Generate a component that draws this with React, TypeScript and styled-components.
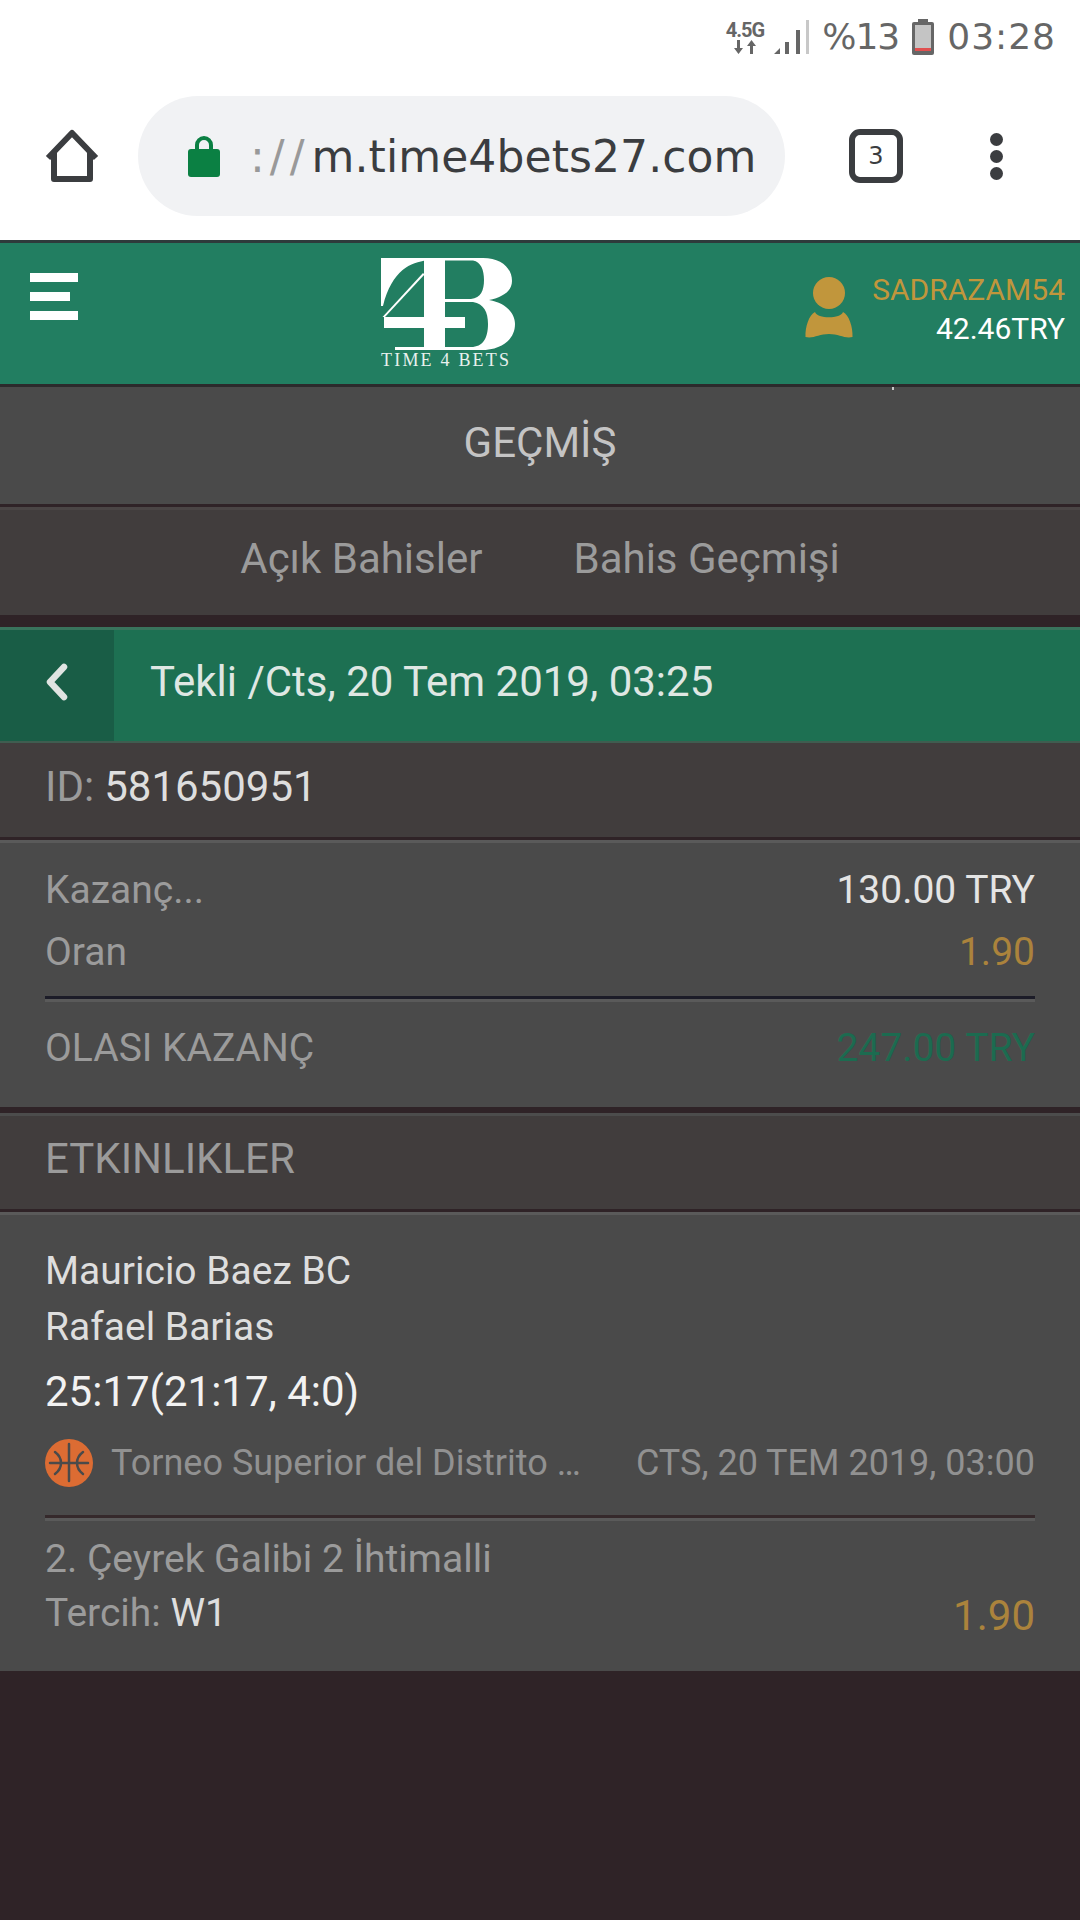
import React from "react";
import styled, { createGlobalStyle } from "styled-components";

const Global = createGlobalStyle`
  html, body { margin: 0; padding: 0; background: #2f2327; }
  body { font-family: Roboto, "Liberation Sans", sans-serif; }
  * { box-sizing: border-box; }
`;
const Page = styled.div`
  width: 1080px; height: 1920px; background: #2f2327; display: flex; flex-direction: column; overflow: hidden;
`;
const StatusBar = styled.div`
  height: 70px; background: #fff; display: flex; align-items: center; justify-content: flex-end;
  padding: 3px 24px 0 0; gap: 13px; color: #666;
`;
const Hand = styled.span<{ $sp: number }>`
  font-family: "DejaVu Sans", sans-serif; font-size: 36px; color: #666; letter-spacing: ${p => p.$sp}px; line-height: 1;
`;
const Net = styled.div`
  display: flex; flex-direction: column; align-items: center; font-family: Roboto, sans-serif; margin-right: -4px;
  font-weight: 700; font-size: 20px; line-height: 20px; color: #666; letter-spacing: -1px;
`;
const Browser = styled.div`
  height: 170px; background: #fff; display: flex; align-items: center; padding: 2px 0 0 45px;
`;
const Omni = styled.div`
  margin-left: 39px; width: 647px; height: 120px; border-radius: 60px; background: #f1f2f4; display: flex; align-items: center;
  padding-left: 50px; gap: 30px; overflow: hidden;
`;
const Url = styled.div`
  font-family: "DejaVu Sans", sans-serif; font-size: 44px; color: #3b3d40; white-space: nowrap; letter-spacing: .1px;
`;
const UrlFade = styled.span` color: #999; letter-spacing: 5px; margin-right: 2px; `;
const TabBtn = styled.div`
  margin-left: 64px; width: 54px; height: 54px; border: 6px solid #3b3d40; border-radius: 11px; display: flex; align-items: center; justify-content: center;
  font-family: "DejaVu Sans", sans-serif; font-size: 24px; color: #3b3d40;
`;
const Dots = styled.div`
  margin-left: 87px; display: flex; flex-direction: column; gap: 4px;
`;
const Dot = styled.i` width: 13px; height: 13px; border-radius: 50%; background: #3b3d40; display: block; `;
const Header = styled.header`
  height: 147px; border-top: 3px solid #2e3a3b; border-bottom: 3px solid #2c2a2c; background: #227e61; display: flex; padding-left: 30px;
`;
const Burger = styled.div`
  display: flex; flex-direction: column; gap: 10px; margin-top: 30px; width: 48px; align-items: flex-start;
`;
const BurgerBar = styled.i<{ $w: number }>` display: block; height: 9px; width: ${p => p.$w}px; background: #fff; `;
const Logo = styled.div`
  margin-left: 303px; margin-top: 15px; width: 134px; display: flex; flex-direction: column; align-items: flex-start;
`;
const LogoText = styled.div`
  font-family: "Liberation Serif", serif; font-size: 18px; line-height: 14px; color: #e8f1ee; white-space: nowrap; letter-spacing: 2.2px; margin-top: 3px;
`;
const User = styled.div`
  margin-left: auto; display: flex; padding: 34px 15px 0 0; gap: 19px;
`;
const UserText = styled.div`
  display: flex; flex-direction: column; align-items: flex-end; font-size: 30px; line-height: 39px; margin-top: -7px;
`;
const Gold = styled.span` color: #c1963c; `;
const White = styled.span` color: #fff; `;
const Title = styled.div`
  height: 120px; background: #4a4a4a; border-bottom: 3px solid #2f2327; display: flex; align-items: center; justify-content: center;
  font-size: 42px; color: #c4c4c4; padding-bottom: 7px; position: relative;
`;
const Speck = styled.i`
  position: absolute; left: 892px; top: 0; width: 2px; height: 3px; background: #c8c8c8;
`;
const Tabs = styled.div`
  height: 108px; background: #413d3d; border-top: 3px solid #4a4545; display: flex; align-items: center; justify-content: center; gap: 91px; font-size: 42px; color: #9b9b9b; padding-bottom: 8px;
`;
const DetailHead = styled.div`
  margin-top: 12px; height: 116px; background: #1d7052; border-top: 3px solid #39735c; border-bottom: 2px solid #3f5d50; display: flex; align-items: stretch;
`;
const Back = styled.div`
  width: 114px; background: #195d46; display: flex; align-items: center; justify-content: center; padding: 0 0 8px 0;
`;
const HeadText = styled.div`
  display: flex; align-items: center; padding: 0 0 8px 36px; font-size: 42px; color: #dfe7e3;
`;
const IdRow = styled.div`
  height: 97px; background: #413d3d; border-bottom: 3px solid #2f2327; display: flex; align-items: center; padding: 0 45px 8px; font-size: 42px; color: #9b9b9b;
`;
const Light = styled.span` color: #dedede; margin-left: 10px; `;
const Summary = styled.div`
  background: #4a4a4a; padding: 16px 45px 0; height: 267px; border-top: 3px solid #5a5a5a; display: flex; flex-direction: column;
`;
const Row = styled.div<{ $h: number }>`
  display: flex; justify-content: space-between; align-items: center; height: ${p => p.$h}px; font-size: 39px; color: #9b9b9b;
`;
const Rule = styled.div<{ $c: string; $gap: number }>`
  height: 6px; margin-top: ${p => p.$gap}px; background: #5a5a5a; border-top: 3px solid ${p => p.$c};
`;
const Val = styled.span<{ $c: string }>` color: ${p => p.$c}; `;
const EventsHead = styled.div`
  margin-top: 6px; height: 99px; background: #413d3d; border-top: 3px solid #4c4c4c; border-bottom: 3px solid #2f2327; display: flex; align-items: center; padding: 0 45px 8px; font-size: 42px; color: #9b9b9b;
`;
const Event = styled.div`
  background: #4a4a4a; padding: 28px 45px 0; height: 459px; border-top: 3px solid #5a5a5a; display: flex; flex-direction: column;
`;
const Team = styled.div`
  font-size: 39px; line-height: 56px; color: #dedede;
`;
const Score = styled.div`
  font-size: 42px; line-height: 74px; color: #f2f2f2;
`;
const Meta = styled.div`
  display: flex; align-items: center; height: 60px; font-size: 36px; color: #919191; margin-top: 4px;
`;
const League = styled.span` margin-left: 18px; white-space: nowrap; `;
const DateText = styled.span` margin-left: auto; white-space: nowrap; `;
const Market = styled.div`
  font-size: 39px; line-height: 48px; color: #9b9b9b; margin-top: 14px;
`;
const Pick = styled.div`
  display: flex; justify-content: space-between; align-items: center; font-size: 39px; line-height: 54px; color: #9b9b9b;
`;
const Odds = styled.span` font-size: 42px; color: #ab833c; margin-top: 6px; `;

const HomeIcon = () => (
  <svg width="54" height="54" viewBox="0 0 54 54" fill="none" stroke="#3b3d40" strokeWidth="6" strokeLinejoin="round">
    <path d="M3 29 L27 4 L51 29 M9 23 V50 H45 V23" />
  </svg>
);
const Lock = () => (
  <svg width="32" height="42" viewBox="0 0 32 42">
    <path d="M9 17V10a7 7 0 0 1 14 0v7" fill="none" stroke="#0b8043" strokeWidth="4" />
    <rect x="0" y="14" width="32" height="28" rx="3" fill="#0b8043" />
  </svg>
);
const Signal = () => (
  <svg width="36" height="36" viewBox="0 0 36 36">
    <path d="M1 35 L7 29 V35Z M12 23h4v12h-4Z M23 11h4v24h-4Z" fill="#666" />
    <path d="M33 1h3v34h-3Z" fill="#c8c8c8" />
  </svg>
);
const Battery = () => (
  <svg width="22" height="36" viewBox="0 0 22 36">
    <rect x="6" y="0" width="10" height="4" fill="#666" />
    <rect x="0" y="3" width="22" height="33" rx="2" fill="#666" />
    <rect x="3" y="6" width="16" height="23" fill="#c4c4c4" />
    <rect x="3" y="29" width="16" height="3" fill="#e04f4f" />
  </svg>
);
const Arrows = () => (
  <svg width="24" height="14" viewBox="0 0 24 14" fill="#666">
    <path d="M4 0h3v8h3l-4.500 6L1 8h3Z M17 14h3V6h3l-4.500-6L14 6h3Z" />
  </svg>
);
const LogoMark = () => (
  <svg width="134" height="92" viewBox="0 0 134 92" fill="#fff">
    <path d="M0 0H46V2.500C30 4 11 12 2 48H0Z" />
    <path d="M1.500 59L42 15L43.500 16.500L4 59Z" />
    <path d="M43 0H64V92H43Z" />
    <path d="M3 59H84V70H3Z" />
    <path d="M14 89H46V92H14Z" />
    <path fillRule="evenodd" d="M64 0H102C120 0 131 10 131 23C131 33 122 39 108 42C125 45 134 55 134 66C134 82 120 92 100 92H64V89H90C102 89 107 80 107 66C107 54 103 46 92 44H64V41H90C100 40 103 32 103 22C103 12 100 4 92 2.500H64Z" />
  </svg>
);
const UserIcon = () => (
  <svg width="48" height="62" viewBox="0 0 48 62" fill="#c1963c">
    <ellipse cx="24" cy="16" rx="16" ry="16" />
    <path d="M10 35 C12 42 36 42 38 35 C44 38 48 50 47.500 60 C40 62 34 57 24 57 C14 57 8 62 0.500 60 C0 50 4 38 10 35Z" />
  </svg>
);
const Chevron = () => (
  <svg width="24" height="38" viewBox="0 0 24 38" fill="none" stroke="#e0e4e2" strokeWidth="6.500" strokeLinecap="round" strokeLinejoin="round">
    <path d="M19 4 L5 19 L19 34" />
  </svg>
);
const Ball = () => (
  <svg width="48" height="48" viewBox="0 0 48 48">
    <circle cx="24" cy="24" r="24" fill="#dc6c33" />
    <path d="M24 5V42M5 24H43M10 13C18 19 18 29 10 35M38 13C30 19 30 29 38 35" stroke="#4a4a4a" strokeWidth="2.500" fill="none" strokeLinecap="round" />
  </svg>
);

export default function App() {
  return (
    <Page>
      <Global />
      <StatusBar>
        <Net>4.5G<Arrows /></Net>
        <Signal />
        <Hand $sp={-1}>%13</Hand>
        <Battery />
        <Hand $sp={1}>03:28</Hand>
      </StatusBar>
      <Browser>
        <HomeIcon />
        <Omni>
          <Lock />
          <Url><UrlFade>://</UrlFade>m.time4bets27.com</Url>
        </Omni>
        <TabBtn>3</TabBtn>
        <Dots><Dot /><Dot /><Dot /></Dots>
      </Browser>
      <Header>
        <Burger>
          <BurgerBar $w={48} />
          <BurgerBar $w={40} />
          <BurgerBar $w={48} />
        </Burger>
        <Logo>
          <LogoMark />
          <LogoText>TIME 4 BETS</LogoText>
        </Logo>
        <User>
          <UserIcon />
          <UserText>
            <Gold>SADRAZAM54</Gold>
            <White>42.46TRY</White>
          </UserText>
        </User>
      </Header>
      <Title><Speck />GEÇMİŞ</Title>
      <Tabs><span>Açık Bahisler</span><span>Bahis Geçmişi</span></Tabs>
      <DetailHead>
        <Back><Chevron /></Back>
        <HeadText>Tekli /Cts, 20 Tem 2019, 03:25</HeadText>
      </DetailHead>
      <IdRow>ID:<Light>581650951</Light></IdRow>
      <Summary>
        <Row $h={62}><span>Kazanç...</span><Val $c="#e4e4e4">130.00 TRY</Val></Row>
        <Row $h={62}><span>Oran</span><Val $c="#ab833c">1.90</Val></Row>
        <Rule $c="#1c1c28" $gap={13} />
        <Row $h={92}><span>OLASI KAZANÇ</span><Val $c="#1c6b50">247.00 TRY</Val></Row>
      </Summary>
      <EventsHead>ETKINLIKLER</EventsHead>
      <Event>
        <Team>Mauricio Baez BC</Team>
        <Team>Rafael Barias</Team>
        <Score>25:17(21:17, 4:0)</Score>
        <Meta>
          <Ball />
          <League>Torneo Superior del Distrito …</League>
          <DateText>CTS, 20 TEM 2019, 03:00</DateText>
        </Meta>
        <Rule $c="#35292b" $gap={22} />
        <Market>2. Çeyrek Galibi 2 İhtimalli</Market>
        <Pick><span>Tercih: <Val $c="#dedede">W1</Val></span><Odds>1.90</Odds></Pick>
      </Event>
    </Page>
  );
}
